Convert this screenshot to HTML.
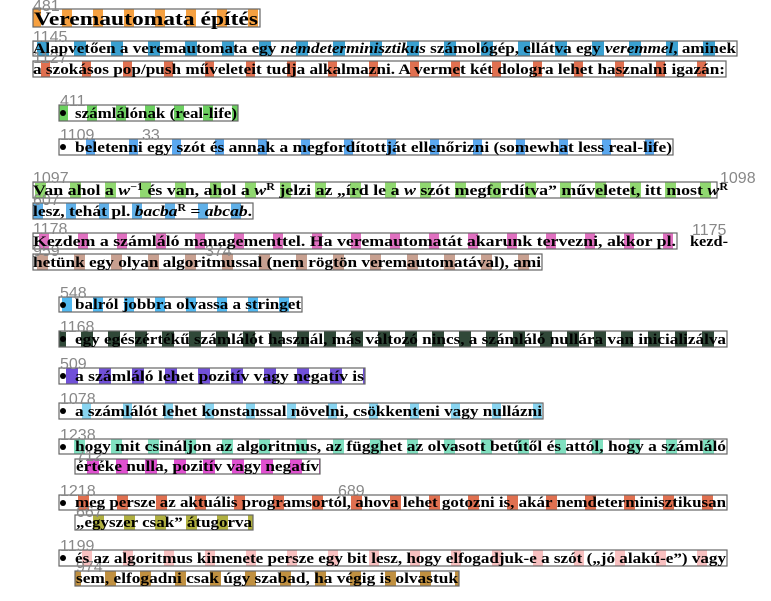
<!DOCTYPE html>
<html><head><meta charset="utf-8"><style>
html,body{margin:0;padding:0;background:#fff;width:771px;height:601px;overflow:hidden}
svg text{font-family:"Liberation Serif",serif;font-weight:bold;font-size:15px;fill:#000}
svg text.l{font-family:"Liberation Sans",sans-serif;font-weight:normal;font-size:16px;fill:#888}
</style></head><body>
<svg width="771" height="601" xmlns="http://www.w3.org/2000/svg">
<defs>
<pattern id="p1" patternUnits="userSpaceOnUse" width="31" height="30"><rect x="0" y="0" width="10" height="30" fill="#f5a040"/></pattern>
<pattern id="p2" patternUnits="userSpaceOnUse" width="37" height="30"><rect x="0" y="0" width="12" height="30" fill="#3aa0d0"/></pattern>
<pattern id="p3" patternUnits="userSpaceOnUse" width="41" height="30"><rect x="0" y="0" width="9" height="30" fill="#e07050"/></pattern>
<pattern id="p4" patternUnits="userSpaceOnUse" width="29" height="30"><rect x="0" y="0" width="10" height="30" fill="#6cd060"/></pattern>
<pattern id="p5" patternUnits="userSpaceOnUse" width="43" height="30"><rect x="0" y="0" width="9" height="30" fill="#5aa8f0"/></pattern>
<pattern id="p6" patternUnits="userSpaceOnUse" width="35" height="30"><rect x="0" y="0" width="11" height="30" fill="#90d870"/></pattern>
<pattern id="p7" patternUnits="userSpaceOnUse" width="33" height="30"><rect x="0" y="0" width="10" height="30" fill="#60b0e8"/></pattern>
<pattern id="p8" patternUnits="userSpaceOnUse" width="39" height="30"><rect x="0" y="0" width="10" height="30" fill="#e070c0"/></pattern>
<pattern id="p9" patternUnits="userSpaceOnUse" width="37" height="30"><rect x="0" y="0" width="11" height="30" fill="#c8a090"/></pattern>
<pattern id="p10" patternUnits="userSpaceOnUse" width="31" height="30"><rect x="0" y="0" width="10" height="30" fill="#50b8f0"/></pattern>
<pattern id="p11" patternUnits="userSpaceOnUse" width="27" height="30"><rect x="0" y="0" width="12" height="30" fill="#304838"/></pattern>
<pattern id="p12" patternUnits="userSpaceOnUse" width="33" height="30"><rect x="0" y="0" width="12" height="30" fill="#7050d8"/></pattern>
<pattern id="p13" patternUnits="userSpaceOnUse" width="41" height="30"><rect x="0" y="0" width="9" height="30" fill="#88d4f0"/></pattern>
<pattern id="p14" patternUnits="userSpaceOnUse" width="37" height="30"><rect x="0" y="0" width="11" height="30" fill="#80e0c0"/></pattern>
<pattern id="p15" patternUnits="userSpaceOnUse" width="29" height="30"><rect x="0" y="0" width="12" height="30" fill="#e050d0"/></pattern>
<pattern id="p16" patternUnits="userSpaceOnUse" width="39" height="30"><rect x="0" y="0" width="11" height="30" fill="#e07050"/></pattern>
<pattern id="p17" patternUnits="userSpaceOnUse" width="31" height="30"><rect x="0" y="0" width="11" height="30" fill="#b0b040"/></pattern>
<pattern id="p18" patternUnits="userSpaceOnUse" width="41" height="30"><rect x="0" y="0" width="10" height="30" fill="#f8c0c0"/></pattern>
<pattern id="p19" patternUnits="userSpaceOnUse" width="35" height="30"><rect x="0" y="0" width="11" height="30" fill="#c09040"/></pattern>
</defs>
<g stroke="#666" stroke-width="1.2">
<rect x="33" y="9" width="227" height="18" fill="url(#p1)"/>
<rect x="33" y="41" width="704" height="15" fill="url(#p2)"/>
<rect x="33" y="61" width="693" height="16" fill="url(#p3)"/>
<rect x="59" y="105" width="179" height="16" fill="url(#p4)"/>
<rect x="59" y="139" width="614" height="16" fill="url(#p5)"/>
<rect x="33" y="182" width="684" height="16" fill="url(#p6)"/>
<rect x="33" y="203" width="220" height="16" fill="url(#p7)"/>
<rect x="33" y="233" width="644" height="16" fill="url(#p8)"/>
<rect x="33" y="254" width="509" height="16" fill="url(#p9)"/>
<rect x="59" y="297" width="243" height="15" fill="url(#p10)"/>
<rect x="59" y="331" width="668" height="16" fill="url(#p11)"/>
<rect x="59" y="368" width="306" height="16" fill="url(#p12)"/>
<rect x="59" y="403" width="484" height="16" fill="url(#p13)"/>
<rect x="59" y="439" width="668" height="15" fill="url(#p14)"/>
<rect x="75" y="459" width="245" height="15" fill="url(#p15)"/>
<rect x="59" y="495" width="668" height="15" fill="url(#p16)"/>
<rect x="75" y="515" width="178" height="15" fill="url(#p17)"/>
<rect x="59" y="550" width="668" height="16" fill="url(#p18)"/>
<rect x="75" y="571" width="384" height="15" fill="url(#p19)"/>
</g>
<g fill="#000">
<circle cx="63" cy="113" r="3"/><circle cx="63" cy="147" r="3"/><circle cx="63" cy="305" r="3"/>
<circle cx="63" cy="339" r="3"/><circle cx="63" cy="376" r="3"/><circle cx="63" cy="411" r="3"/>
<circle cx="63" cy="447" r="3"/><circle cx="63" cy="503" r="3"/><circle cx="63" cy="558" r="3"/>
</g>
<text class="l" x="33" y="11">481</text>
<text class="l" x="33" y="42">1145</text>
<text class="l" x="33" y="63">1127</text>
<text class="l" x="60" y="106">411</text>
<text class="l" x="60" y="140">1109</text>
<text class="l" x="142" y="140">33</text>
<text class="l" x="33" y="183">1097</text>
<text class="l" x="720" y="183">1098</text>
<text class="l" x="33" y="205">607</text>
<text class="l" x="33" y="234">1178</text>
<text class="l" x="692" y="235">1175</text>
<text class="l" x="33" y="256">959</text>
<text class="l" x="205" y="256">374</text>
<text class="l" x="60" y="298">548</text>
<text class="l" x="60" y="332">1168</text>
<text class="l" x="60" y="369">509</text>
<text class="l" x="60" y="404">1078</text>
<text class="l" x="60" y="440">1238</text>
<text class="l" x="76" y="461">712</text>
<text class="l" x="60" y="496">1218</text>
<text class="l" x="338" y="496">689</text>
<text class="l" x="76" y="517">667</text>
<text class="l" x="60" y="551">1199</text>
<text class="l" x="76" y="572">974</text>

<text x="34" y="25" style="font-size:19px" textLength="224" lengthAdjust="spacingAndGlyphs">Veremautomata építés</text>
<text x="33" y="53" textLength="703" lengthAdjust="spacingAndGlyphs">Alapvetően a veremautomata egy <tspan font-style="italic">nemdeterminisztikus</tspan> számológép, ellátva egy <tspan font-style="italic">veremmel</tspan>, aminek</text>
<text x="33" y="74" textLength="692" lengthAdjust="spacingAndGlyphs">a szokásos pop/push műveleteit tudja alkalmazni. A vermet két dologra lehet hasznalni igazán:</text>
<text x="75" y="118" textLength="162" lengthAdjust="spacingAndGlyphs">számlálónak (real-life)</text>
<text x="75" y="152" textLength="597" lengthAdjust="spacingAndGlyphs">beletenni egy szót és annak a megfordítottját ellenőrizni (somewhat less real-life)</text>
<text x="33" y="195" textLength="695" lengthAdjust="spacingAndGlyphs">Van ahol a <tspan font-style="italic">w</tspan><tspan dy="-5" font-size="10">−1</tspan><tspan dy="5"> és van, ahol a </tspan><tspan font-style="italic">w</tspan><tspan dy="-5" font-size="10">R</tspan><tspan dy="5"> jelzi az „írd le a </tspan><tspan font-style="italic">w</tspan> szót megfordítva” műveletet, itt most <tspan font-style="italic">w</tspan><tspan dy="-5" font-size="10">R</tspan></text>
<text x="33" y="216" textLength="219" lengthAdjust="spacingAndGlyphs">lesz, tehát pl. <tspan font-style="italic">bacba</tspan><tspan dy="-5" font-size="10">R</tspan><tspan dy="5"> = </tspan><tspan font-style="italic">abcab</tspan>.</text>
<text x="33" y="246" textLength="643" lengthAdjust="spacingAndGlyphs">Kezdem a számláló managementtel. Ha veremautomatát akarunk tervezni, akkor pl.</text>
<text x="690" y="246" textLength="38" lengthAdjust="spacingAndGlyphs">kezd-</text>
<text x="33" y="267" textLength="508" lengthAdjust="spacingAndGlyphs">hetünk egy olyan algoritmussal (nem rögtön veremautomatával), ami</text>
<text x="75" y="309" textLength="226" lengthAdjust="spacingAndGlyphs">balról jobbra olvassa a stringet</text>
<text x="75" y="344" textLength="651" lengthAdjust="spacingAndGlyphs">egy egészértékű számlálót használ, más változó nincs, a számláló nullára van inicializálva</text>
<text x="75" y="381" textLength="289" lengthAdjust="spacingAndGlyphs">a számláló lehet pozitív vagy negatív is</text>
<text x="75" y="416" textLength="467" lengthAdjust="spacingAndGlyphs">a számlálót lehet konstanssal növelni, csökkenteni vagy nullázni</text>
<text x="75" y="451" textLength="651" lengthAdjust="spacingAndGlyphs">hogy mit csináljon az algoritmus, az függhet az olvasott betűtől és attól, hogy a számláló</text>
<text x="76" y="471" textLength="243" lengthAdjust="spacingAndGlyphs">értéke nulla, pozitív vagy negatív</text>
<text x="75" y="507" textLength="651" lengthAdjust="spacingAndGlyphs">meg persze az aktuális programsortól, ahova lehet gotozni is, akár nemdeterminisztikusan</text>
<text x="76" y="527" textLength="176" lengthAdjust="spacingAndGlyphs">„egyszer csak” átugorva</text>
<text x="75" y="563" textLength="651" lengthAdjust="spacingAndGlyphs">és az algoritmus kimenete persze egy bit lesz, hogy elfogadjuk-e a szót („jó alakú-e”) vagy</text>
<text x="76" y="583" textLength="382" lengthAdjust="spacingAndGlyphs">sem, elfogadni csak úgy szabad, ha végig is olvastuk</text>
</svg>
</body></html>
